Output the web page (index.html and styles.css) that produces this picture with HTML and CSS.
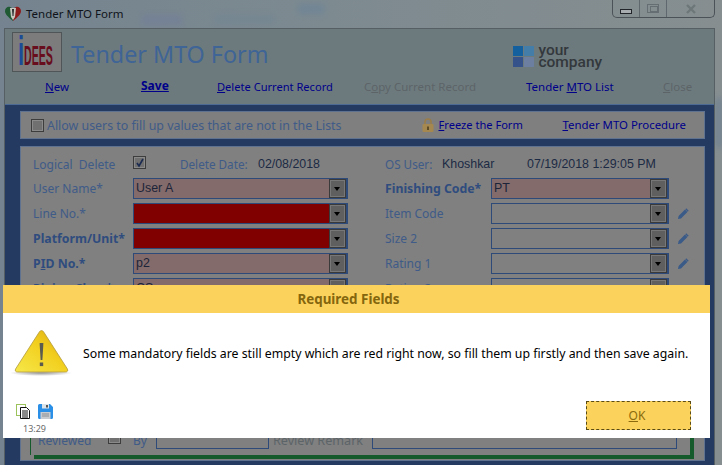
FILE: index.html
```html
<!DOCTYPE html>
<html lang="en">
<head>
<meta charset="utf-8">
<title>Tender MTO Form</title>
<link rel="stylesheet" href="styles.css">
</head>
<body>
<div class="screen">
  <i class="smudge smudge-a"></i><i class="smudge smudge-b"></i><i class="smudge smudge-c"></i><i class="smudge smudge-d"></i>
  <header class="titlebar">
    <svg class="app-icon" width="16" height="16" viewBox="0 0 16 16"><path d="M8 15C3 11 0 8 0 5c0-3 3-5 5-4 1 .4 2 1 3 2V15z" fill="#1f5a35"/><path d="M8 15c5-4 8-7 8-10 0-3-3-5-5-4-1 .4-2 1-3 2V15z" fill="#8c1c1c"/><path d="M5 2h6l-1 9-2 3-2-3z" fill="#c8c8c0"/><path d="M7 3l2 0-.5 7h-1z" fill="#2a2a2a"/></svg>
    <span class="window-title">Tender MTO Form</span>
    <div class="window-controls">
      <span class="ctl"><i class="ctl-min"></i></span>
      <span class="ctl"><i class="ctl-max"></i></span>
      <span class="ctl ctl-last"><svg width="12" height="10" viewBox="0 0 12 10"><path d="M2 1l8 8M10 1L2 9" stroke="#6d7678" stroke-width="2.4" fill="none"/></svg></span>
    </div>
  </header>

  <main class="form">
    <div class="head">
      <div class="logo">
        <svg class="logo-mark" width="48" height="38" viewBox="0 0 48 38"><text transform="translate(5 32) scale(.55 1)" class="logo-i">i</text><text transform="translate(11 32) scale(.38 1)" class="logo-d">DEES</text></svg>
      </div>
      <h1 class="form-title">Tender MTO Form</h1>
      <div class="company">
        <span class="squares"><i class="sq sq1"></i><i class="sq sq2"></i><i class="sq sq3"></i><i class="sq sq4"></i></span>
        <span class="company-name">your<br>company</span>
      </div>
    </div>
    <nav class="toolbar">
      <a class="link"><u>N</u>ew</a>
      <a class="link link-bold"><u>Save</u></a>
      <a class="link link-tight"><u>D</u>elete Current Record</a>
      <a class="link link-off">C<u>o</u>py Current Record</a>
      <a class="link">Tender <u>M</u>TO List</a>
      <a class="link link-off"><u>C</u>lose</a>
    </nav>
    <div class="panel">
      <div class="options">
        <span class="check"></span>
        <span class="allow">Allow users to fill up values that are not in the Lists</span>
        <svg class="lock" width="12" height="14" viewBox="0 0 12 14"><path d="M3 6V4a3 3 0 0 1 6 0v2" fill="none" stroke="#9a7d48" stroke-width="1.6"/><rect x="0.5" y="6" width="11" height="8" rx="1" fill="#a58850"/><rect x="5" y="8.5" width="2" height="3.5" fill="#5e4c28"/></svg>
        <a class="link link-tight opt-freeze"><u>F</u>reeze the Form</a>
        <a class="link opt-proc"><u>T</u>ender MTO Procedure</a>
      </div>
      <section class="fields">
        <div class="meta">
          <span class="lab lab-logical">Logical &nbsp;Delete</span>
          <span class="check check-on"><svg width="10" height="10" viewBox="0 0 10 10"><path d="M2 5l2 3 4-7" fill="none" stroke="#1a2a50" stroke-width="1.6"/></svg></span>
          <span class="lab lab-date">Delete Date:</span>
          <span class="val val-date">02/08/2018</span>
          <span class="lab lab-os">OS User:</span>
          <span class="val val-user">Khoshkar</span>
          <span class="val val-stamp">07/19/2018 1:29:05 PM</span>
        </div>
        <div class="grid">
          <span class="lab">User Name*</span>
          <div class="combo combo-filled"><span class="combo-text">User A</span><b class="arrow"></b></div>
          <span class="lab lab-strong">Finishing Code*</span>
          <div class="combo combo-filled combo-r"><span class="combo-text">PT</span><b class="arrow"></b></div>
          <span></span>

          <span class="lab">Line No.*</span>
          <div class="combo combo-red"><span class="combo-text"></span><b class="arrow"></b></div>
          <span class="lab">Item Code</span>
          <div class="combo combo-r"><span class="combo-text"></span><b class="arrow"></b></div>
          <svg class="pen" width="12" height="12" viewBox="0 0 12 12"><path d="M1 11l.6-3L8 1.6 10.4 4 4 10.4z" fill="#3a5a88"/><path d="M8.8 .8l2.4 2.4" stroke="#3a5a88" stroke-width="1.4"/></svg>

          <span class="lab lab-strong">Platform/Unit*</span>
          <div class="combo combo-red"><span class="combo-text"></span><b class="arrow"></b></div>
          <span class="lab">Size 2</span>
          <div class="combo combo-r"><span class="combo-text"></span><b class="arrow"></b></div>
          <svg class="pen" width="12" height="12" viewBox="0 0 12 12"><path d="M1 11l.6-3L8 1.6 10.4 4 4 10.4z" fill="#3a5a88"/><path d="M8.8 .8l2.4 2.4" stroke="#3a5a88" stroke-width="1.4"/></svg>

          <span class="lab lab-strong">P<u>I</u>D No.*</span>
          <div class="combo combo-filled"><span class="combo-text">p2</span><b class="arrow"></b></div>
          <span class="lab">Rating 1</span>
          <div class="combo combo-r"><span class="combo-text"></span><b class="arrow"></b></div>
          <svg class="pen" width="12" height="12" viewBox="0 0 12 12"><path d="M1 11l.6-3L8 1.6 10.4 4 4 10.4z" fill="#3a5a88"/><path d="M8.8 .8l2.4 2.4" stroke="#3a5a88" stroke-width="1.4"/></svg>

          <span class="lab lab-strong">Piping Class*</span>
          <div class="combo combo-filled"><span class="combo-text">CS</span><b class="arrow"></b></div>
          <span class="lab">Rating 2</span>
          <div class="combo combo-r"><span class="combo-text"></span><b class="arrow"></b></div>
          <span></span>
        </div>
        <div class="review">
          <span class="lab lab-rev">Reviewed</span>
          <span class="check check-rev"></span>
          <span class="lab lab-by">By</span>
          <span class="input input-by"></span>
          <span class="lab lab-rem">Review Remark</span>
          <span class="input input-rem"></span>
        </div>
      </section>
    </div>
  </main>

  <aside class="dialog">
    <div class="dialog-head">Required Fields</div>
    <div class="dialog-body">
      <svg class="warn" width="62" height="48" viewBox="0 0 62 48">
        <defs>
          <linearGradient id="warnfill" x1="0" y1="1" x2="1" y2="0"><stop offset="0" stop-color="#f6e84a"/><stop offset=".55" stop-color="#f2cf1e"/><stop offset="1" stop-color="#d9a510"/></linearGradient>
          <radialGradient id="warnshadow"><stop offset="0" stop-color="#999"/><stop offset="1" stop-color="#fff"/></radialGradient>
        </defs>
        <ellipse cx="31" cy="44" rx="31" ry="3" fill="url(#warnshadow)"/>
        <path d="M31.5 1.500c1 0 1.800.8 2.400 1.800l23.400 36.500c1 1.700.3 3.200-1.700 3.200H7.400c-2 0-2.700-1.500-1.700-3.200L29.100 3.300c.6-1 1.400-1.800 2.400-1.800z" fill="url(#warnfill)" stroke="#b39a3c" stroke-width=".8"/>
        <path d="M29.600 14h3.800l-1 17h-1.800z" fill="#5b5b50"/>
        <rect x="29.800" y="33.500" width="3.400" height="3.600" fill="#5b5b50"/>
      </svg>
      <p class="message">Some mandatory fields are still empty which are red right now, so fill them up firstly and then save again.</p>
    </div>
    <div class="dialog-foot">
      <div class="tray">
        <div class="tray-icons">
          <svg width="15" height="15" viewBox="0 0 15 15"><rect x=".5" y=".5" width="9" height="11" fill="#fff" stroke="#9cc25c"/><path d="M4.500 3.500h6l3 3v8h-9z" fill="#fff" stroke="#111"/><path d="M6 7h6M6 9h6M6 11h6M6 13h6" stroke="#111"/></svg>
          <svg width="15" height="15" viewBox="0 0 15 15"><path d="M0 1.500A1.500 1.500 0 0 1 1.500 0H12l3 3v10.500a1.500 1.500 0 0 1-1.500 1.500h-12A1.500 1.500 0 0 1 0 13.500z" fill="#2a8fe6"/><rect x="4" y="0" width="7" height="4.500" fill="#dce4ea"/><rect x="8" y="1" width="2" height="2.500" fill="#555"/><rect x="2.500" y="8" width="10" height="7" fill="#c8ccd0"/><path d="M4 10h7M4 12h7" stroke="#8a8f94"/></svg>
        </div>
        <span class="time">13:29</span>
      </div>
      <button class="ok" type="button"><u>O</u>K</button>
    </div>
  </aside>
</div>
</body>
</html>
```

FILE: styles.css
```css
* { box-sizing: border-box; }
html, body { margin: 0; padding: 0; }
body { width: 722px; height: 465px; overflow: hidden; font-family: "Noto Sans", "Open Sans", sans-serif; }

.screen {
  position: relative;
  width: 722px;
  height: 465px;
  overflow: hidden;
  background: linear-gradient(90deg, #74838f 0, #7d8a90 45%, #868e90 100%);
}
.smudge { position: absolute; filter: blur(3px); opacity: .4; }
.smudge-a { left: 142px; top: 15px; width: 40px; height: 10px; background: #6f78a0; }
.smudge-b { left: 215px; top: 14px; width: 60px; height: 11px; background: #6f8596; }
.smudge-c { left: 298px; top: 4px; width: 26px; height: 10px; background: #5f7f9e; }
.smudge-d { left: 716px; top: 98px; width: 6px; height: 50px; background: #4d6e98; }

.titlebar { position: relative; display: flex; align-items: flex-start; height: 28px; padding: 6px 7px 0 5px; }
.app-icon { flex: none; }
.window-title { margin-left: 5px; font-size: 11.5px; line-height: 15px; color: #10141a; }
.window-controls {
  display: flex;
  margin: -6px 0 0 auto;
  height: 18px;
  border: 1px solid #4c5358;
  border-top: 0;
  border-radius: 0 0 5px 5px;
}
.ctl { display: flex; align-items: center; justify-content: center; width: 27px; border-right: 1px solid #5f686c; }
.ctl-last { width: 47px; border-right: 0; }
.ctl-min { display: block; width: 12px; height: 5px; margin-top: 5px; background: #a8aeb0; border: 1px solid #22262a; }
.ctl-max { display: block; width: 12px; height: 9px; border: 1px solid #656e72; position: relative; }
.ctl-max::after { content: ""; position: absolute; left: 2px; top: 1px; width: 6px; height: 4px; border: 1px solid #656e72; }

.form {
  position: relative;
  width: 711px;
  height: 437px;
  margin-left: 4px;
  border: 1px solid #565f63;
  border-bottom: 0;
  background: #6d7a7d;
}
.head { display: flex; align-items: flex-start; height: 47px; padding: 3px 0 0 7px; }
.logo { width: 50px; height: 40px; border: 1px solid #505558; background: #7c7c7c; flex: none; }
.logo-mark { display: block; overflow: visible; }
.logo-i { font: 700 40px "Liberation Sans", sans-serif; fill: #1b4a97; }
.logo-d { font: 700 28px "Liberation Sans", sans-serif; fill: #680d1c; }
.form-title {
  margin: 7px 0 0 9px;
  font-size: 23.3px;
  line-height: 30px;
  font-weight: 400;
  color: #3f6496;
  white-space: nowrap;
}
.company { display: flex; margin: 14px 0 0 245px; }
.squares { display: grid; grid-template-columns: 10px 10px; grid-template-rows: 10px 10px; gap: 1px; width: 21px; }
.sq { display: block; }
.sq1 { background: #14609f; }
.sq2 { background: #447da8; }
.sq3 { background: #36528a; }
.sq4 { background: #6c7fa0; }
.company-name { margin: -2px 0 0 4px; font: 500 15.500px/12px "Roboto", sans-serif; color: #33383c; }

.toolbar {
  display: grid;
  grid-template-columns: 96px 76px 147px 162px 137px auto;
  height: 28px;
  padding: 3px 0 0 40px;
}
.link { font-size: 11.5px; line-height: 16px; color: #00008a; white-space: nowrap; }
.link-tight { font-size: 11.1px; }
.link-bold { font-size: 12px; font-weight: 700; margin-top: -1px; }
.link-off { color: #5c6468; }

.panel { height: 361px; padding: 6px 9px 0 15px; background: #243a60; border-top: 1px solid #4d6a94; }
.options {
  display: flex;
  align-items: center;
  height: 28px;
  padding: 0 18px 0 10px;
  background: #7f7f7f;
  border: 1px solid #5f7290;
}
.check { display: block; flex: none; width: 13px; height: 13px; border: 1px solid #3d3d3d; background: #707070; box-shadow: inset 0 0 0 1px #8a8a8a; }
.allow { margin-left: 3px; font-size: 12.4px; color: #3f5b88; white-space: nowrap; }
.lock { margin-left: 80px; flex: none; }
.opt-freeze { margin-left: 5px; }
.opt-proc { margin-left: auto; font-size: 11.4px; }

.fields { position: relative; height: 315px; margin-top: 7px; padding: 7px 0 0 12px; background: #808080; border: 1px solid #5f7290; }
.lab { font-size: 12px; line-height: 21px; color: #3f5b88; white-space: nowrap; }
.lab-strong { font-size: 12.3px; font-weight: 700; color: #2f4c7e; }
.val { font: 12.4px/21px "Liberation Sans", sans-serif; color: #1c2a44; white-space: nowrap; }
.meta { display: flex; align-items: center; height: 21px; }
.lab-logical { width: 100px; }
.check-on { display: flex; align-items: center; justify-content: center; margin-top: -4px; }
.lab-date { margin-left: 34px; width: 78px; font-size: 11.7px; }
.val-date { width: 127px; }
.lab-os { width: 57px; font-size: 11.7px; }
.val-user { width: 85px; }

.grid {
  display: grid;
  grid-template-columns: 100px 215px 37px 106px 178px 20px;
  grid-auto-rows: 21px;
  row-gap: 4px;
  align-items: center;
  margin-top: 3px;
}
.grid .lab:nth-child(5n+3) { grid-column: 4; }
.combo { display: flex; height: 21px; border: 1px solid #2e4a78; border-right-width: 2px; background: #808080; }
.combo-filled { background: #836b6b; }
.combo-red { background: #800000; }
.combo-text { flex: 1; padding-left: 2px; font: 12.4px/19px "Liberation Sans", sans-serif; color: #1b2438; }
.arrow { position: relative; width: 17px; background: #5f5f5f; border: 1px solid #3a3a3a; box-shadow: inset 0 0 0 1px #777; }
.arrow::after {
  content: "";
  position: absolute;
  left: 4px;
  top: 7px;
  border: 3.500px solid transparent;
  border-top: 4px solid #000;
  border-bottom: 0;
}
.pen { margin-left: 8px; }

.review {
  position: absolute;
  left: 9px;
  right: 14px;
  bottom: 5px;
  height: 27px;
  display: flex;
  align-items: flex-start;
  padding: 2px 0 0 7px;
  border-left: 1px solid #155a2a;
  box-shadow: 4px 4px 0 #155a2a;
}
.lab-rev { width: 70px; }
.check-rev { margin-top: 1px; }
.lab-by { margin-left: 12px; width: 16px; }
.input { display: block; height: 19px; border: 1px solid #2e4a78; }
.input-by { margin-left: 7px; width: 113px; }
.lab-rem { margin-left: 4px; width: 99px; font-size: 12.6px; color: #5c6468; }
.input-rem { width: 305px; }

.dialog {
  position: absolute;
  left: 3px;
  top: 285px;
  width: 707px;
  height: 153px;
  display: flex;
  flex-direction: column;
  background: #fff;
}
.dialog-head {
  height: 28px;
  padding-right: 16px;
  background: #fbd25c;
  color: #84660e;
  font-size: 13.4px;
  font-weight: 700;
  line-height: 28px;
  text-align: center;
}
.dialog-body { display: flex; align-items: flex-start; height: 82px; padding: 16px 0 0 7px; }
.warn { flex: none; }
.message { margin: 16px 0 0 11px; font-size: 12.3px; line-height: 17px; color: #000; white-space: nowrap; }
.dialog-foot { display: flex; align-items: flex-start; justify-content: space-between; flex: 1; padding: 0 19px 0 13px; }
.tray { display: flex; flex-direction: column; align-items: center; width: 37px; margin-top: 9px; }
.tray-icons { display: flex; gap: 7px; }
.time { margin-top: 4px; font-size: 9px; line-height: 12px; color: #6a6a6a; }
.ok {
  width: 105px;
  height: 29px;
  margin-top: 6px;
  padding: 0 3px 0 0;
  border: 1px dashed #5a4a14;
  background: #fbd25c;
  color: #8a6a0c;
  font: 12px "Noto Sans", sans-serif;
}
```
